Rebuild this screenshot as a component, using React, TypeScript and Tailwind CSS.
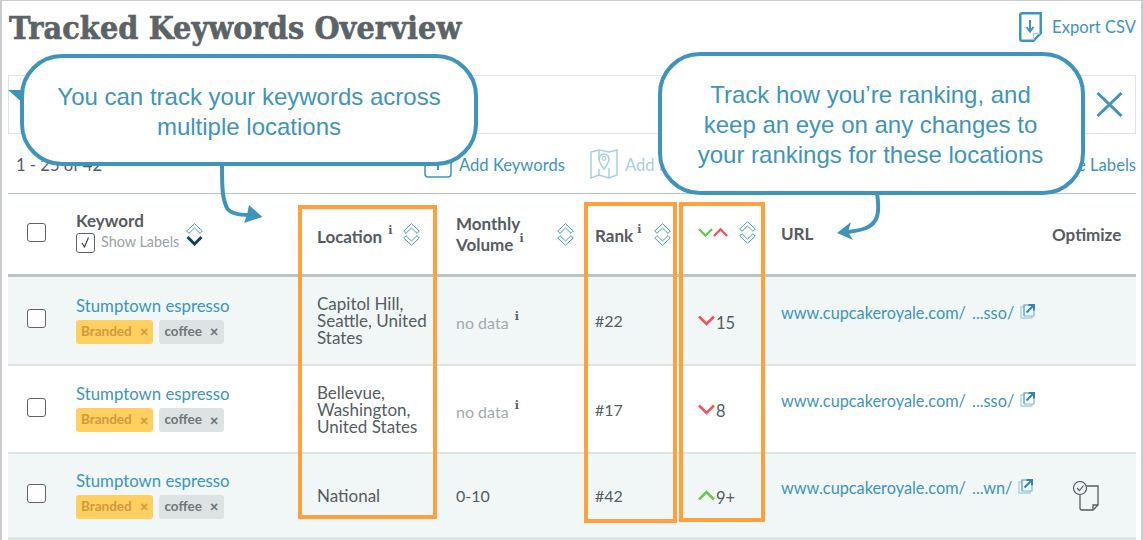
import React from "react";

const lato = "font-['Lato','Noto_Sans',sans-serif]";

function SortIcon({ active = false }: { active?: boolean }) {
  return (
    <svg width="17" height="23" viewBox="0 0 17 23" fill="none" className="shrink-0">
      <path d="M0.7 8 L8.5 0.7 L16.3 8 L14 10.3 L8.5 5 L3 10.3 Z" stroke="#4b9cc2" strokeWidth="1" />
      {active ? (
        <path d="M1.5 14 L8.5 21 L15.5 14" stroke="#12435c" strokeWidth="3" />
      ) : (
        <path d="M0.7 15 L8.5 22.3 L16.3 15 L14 12.7 L8.5 18 L3 12.7 Z" stroke="#4b9cc2" strokeWidth="1" />
      )}
    </svg>
  );
}

function Info({ className = "ml-[2px]" }: { className?: string }) {
  return <sup className={`font-['DejaVu_Serif',serif] text-[11px] font-bold text-[#555c5f] leading-none -top-[0.8em] ${className}`}>i</sup>;
}

function Checkbox() {
  return <span className="block w-[19px] h-[19px] bg-white border border-[#5b6366] rounded-[3px]" />;
}

function Chip({ label, tone }: { label: string; tone: "yellow" | "gray" }) {
  const cls = tone === "yellow" ? "bg-[#ffd05f] text-[#cf9a3f]" : "bg-[#dde3e2] text-[#6f7779]";
  return (
    <span className={`flex items-center h-[24px] px-[5px] gap-[8px] rounded-[3px] text-[13.5px] font-bold leading-none ${cls}`}>
      {label}
      <span className="text-[15px] font-black">×</span>
    </span>
  );
}

function Chevron({ dir, w = 17, color }: { dir: "up" | "down"; w?: number; color: string }) {
  const up = dir === "up";
  return (
    <svg width={w} height="11" viewBox="0 0 17 11" fill="none" className="shrink-0">
      <path d={up ? "M1 9.5 L8.5 2 L16 9.5" : "M1 1.5 L8.5 9 L16 1.5"} stroke={color} strokeWidth="2.5" />
    </svg>
  );
}

function ExtIcon() {
  return (
    <svg width="15" height="16" viewBox="0 0 15 16" fill="none" className="ml-[6px] -mt-[3px] shrink-0">
      <path d="M3 4 H1 V15 H12 V13" stroke="#a9cfe0" strokeWidth="1.3" />
      <path d="M14 7.5 V13 H4" stroke="#7db8d4" strokeWidth="1.2" />
      <path d="M4 13 V2 H9" stroke="#3f94bc" strokeWidth="1.2" />
      <path d="M6.5 9.5 L13 3 M8.5 2 H14 V7.5" stroke="#2f86b0" strokeWidth="2" />
    </svg>
  );
}

type Row = {
  loc: string[];
  vol: string | null;
  rank: string;
  dir: "up" | "down";
  delta: string;
  url: string;
  h: string;
  bg: string;
  opt?: boolean;
};

const rows: Row[] = [
  { loc: ["Capitol Hill,", "Seattle, United", "States"], vol: null, rank: "#22", dir: "down", delta: "15", url: "www.cupcakeroyale.com/ ...sso/", h: "h-[89px] border-b-2", bg: "bg-[#f0f7f6]" },
  { loc: ["Bellevue,", "Washington,", "United States"], vol: null, rank: "#17", dir: "down", delta: "8", url: "www.cupcakeroyale.com/ ...sso/", h: "h-[88px] border-b-2", bg: "bg-white" },
  { loc: ["National"], vol: "0-10", rank: "#42", dir: "up", delta: "9+", url: "www.cupcakeroyale.com/ ...wn/", h: "h-[86px] border-b-[3px]", bg: "bg-[#f0f7f6]", opt: true },
];

const grid = "grid grid-cols-[68px_241px_139px_139px_103px_83px_271px_84px] items-center";

export default function App() {
  return (
    <div className={`relative w-[1143px] h-[540px] overflow-hidden bg-white border-t border-x-2 border-[#c9cccc] ${lato} text-[#555c5f]`}>
      <div className="pl-[6px] pr-[5px]">
        <div className="flex items-start justify-between h-[74px]">
          <h1 className="font-['DejaVu_Serif',serif] [font-stretch:condensed] [-webkit-text-stroke:0.6px_#5b6366] font-bold text-[32px] leading-[40px] mt-[7px] ml-[1px] text-[#5b6366] tracking-[0.1px]">
            Tracked Keywords Overview
          </h1>
          <div className="flex items-center mt-[11px] text-[16.6px] text-[#3f94bc] leading-none">
            <svg width="23" height="30" viewBox="0 0 23 30" fill="none" className="mr-[10px]">
              <path d="M3 1.25 H21.75 V21 L14.5 28.75 H3 Q1.25 28.75 1.25 27 V3 Q1.25 1.25 3 1.25 Z" stroke="#3f94bc" strokeWidth="2.5" />
              <path d="M14.5 28 V21.5 H21" stroke="#a9cfe0" strokeWidth="1.5" />
              <path d="M11 8 V19 M7.5 15 L11 19.5 L14.5 15" stroke="#3f94bc" strokeWidth="2" />
            </svg>
            Export CSV
          </div>
        </div>
        <div className="flex items-center justify-end h-[59px] border border-[#dde4e3] pr-[12px]">
          <svg width="27" height="25" viewBox="0 0 27 25" fill="none">
            <path d="M1.5 1 L25.5 24 M25.5 1 L1.5 24" stroke="#3f94bc" strokeWidth="3" />
          </svg>
        </div>
        <div className="relative flex items-center h-[60px] border-b border-[#b9c4c4] text-[16.6px] pl-[8px]">
          <span className="w-[408px] pt-[3px]">1 - 25 of 42</span>
          <span className="flex items-center text-[#3f94bc]">
            <svg width="28" height="30" viewBox="0 0 28 30" fill="none" className="mr-[7px]">
              <rect x="1" y="1" width="26" height="27" rx="3" stroke="#3f94bc" strokeWidth="1.5" />
              <path d="M14 8 V21 M8 14.5 H20" stroke="#3f94bc" strokeWidth="2" />
            </svg>
            <span className="pt-[3px]">Add Keywords</span>
          </span>
          <span className="flex items-center text-[#a9cfe0] ml-[25px]">
            <svg width="28" height="30" viewBox="0 0 28 30" fill="none" className="mr-[7px]">
              <path d="M1 3 L9 1 L19 3 L27 1 V26 L19 29 L9 26 L1 29 Z M9 1 V11 M19 19 V29 M9 20 V26" stroke="#a9cfe0" strokeWidth="1.5" />
              <path d="M14 20 C11 16 9 13 9 10 A5 5 0 0 1 19 10 C19 13 17 16 14 20 Z" stroke="#a9cfe0" strokeWidth="1.5" />
              <circle cx="14" cy="9.5" r="1.8" stroke="#a9cfe0" strokeWidth="1.2" />
            </svg>
            <span className="pt-[3px]">Add Locations</span>
          </span>
          <span className="ml-auto pt-[3px] text-[#3f94bc]">Manage Labels</span>
        </div>

        <div className={`${grid} h-[83px] border-b-[3px] border-[#b9c4c4] text-[17px] font-bold leading-[20px]`}>
          <div className="pl-[19px] -mt-[4px]"><Checkbox /></div>
          <div className="flex items-center">
            <div className="w-[110px] -mt-[5px]">
              <div className="mb-[2px]">Keyword</div>
              <div className="flex items-center text-[14.4px] font-normal text-[#9aa1a3] leading-none">
                <span className="flex items-center justify-center w-[19px] h-[20px] mr-[6px] bg-white border border-[#5b6366] rounded-[3px]">
                  <svg width="11" height="13" viewBox="0 0 11 13" fill="none"><path d="M2 7 L4.5 11 L8.5 1.5" stroke="#444" strokeWidth="1.2" /></svg>
                </span>
                Show Labels
              </div>
            </div>
            <SortIcon active />
          </div>
          <div className="flex items-center">
            <span className="w-[86px] pt-[6px]">Location <Info /></span>
            <SortIcon />
          </div>
          <div className="flex items-center">
            <span className="w-[101px] leading-[21px]">Monthly<br />Volume <Info /></span>
            <SortIcon />
          </div>
          <div className="flex items-center">
            <span className="w-[59px] pt-[4px]">Rank <Info className="ml-0" /></span>
            <SortIcon />
          </div>
          <div className="flex items-center -mt-[3px]">
            <span className="flex w-[41px]">
              <Chevron dir="down" w={15} color="#69c84a" />
              <Chevron dir="up" w={15} color="#f4525a" />
            </span>
            <SortIcon />
          </div>
          <div className="-mt-[1px]">URL</div>
          <div className="mt-[1px]">Optimize</div>
        </div>

        {rows.map((r, i) => (
          <div key={i} className={`${grid} ${r.h} ${r.bg} border-[#dde4e3] text-[16px] leading-[17px]`}>
            <div className="pl-[19px] pb-[4px]"><Checkbox /></div>
            <div className="pb-[2px]">
              <div className="text-[16.8px] text-[#3f94bc] leading-[20px] mb-[4px]">Stumptown espresso</div>
              <div className="flex gap-[6px]">
                <Chip label="Branded" tone="yellow" />
                <Chip label="coffee" tone="gray" />
              </div>
            </div>
            <div className="text-[17px]">{r.loc.map((l) => <div key={l}>{l}</div>)}</div>
            <div>
              {r.vol ?? <span className="text-[#a3aaac] inline-block mt-[4px]">no data <Info /></span>}
            </div>
            <div>{r.rank}</div>
            <div className="flex items-center">
              <Chevron dir={r.dir} color={r.dir === "up" ? "#69c84a" : "#f4525a"} />
              <span className="mt-[5px] ml-[1px] text-[16.5px]">{r.delta}</span>
            </div>
            <div className="flex items-center pb-[17px] text-[#3f94bc] text-[16.3px] [word-spacing:2px]">
              {r.url}
              <ExtIcon />
            </div>
            <div className="pl-[20px]">
              {r.opt && (
                <svg width="27" height="30" viewBox="0 0 27 30" fill="none">
                  <path d="M8 13 V27 Q8 29 10 29 H21 L26 24 V5 H13" stroke="#555c5f" strokeWidth="1.3" />
                  <path d="M21 29 V24 H26" stroke="#555c5f" strokeWidth="1.3" />
                  <circle cx="8" cy="7" r="6.5" fill="#f0f7f6" stroke="#555c5f" strokeWidth="1.2" />
                  <path d="M5 7 L7.5 9.5 L11.5 4.5" stroke="#555c5f" strokeWidth="1.2" />
                </svg>
              )}
            </div>
          </div>
        ))}
      </div>

      {/* annotation overlays */}
      <svg className="absolute left-[6px] top-[89px]" width="16" height="14" viewBox="0 0 16 14"><path d="M0 0 H16 V14 Z" fill="#3f94bc" /></svg>

      <div className="absolute left-[18px] top-[53px] w-[458px] h-[112px] pt-[4px] rounded-[42px] border-[4px] border-[#3f94bc] bg-white flex items-center justify-center text-center font-['Liberation_Sans',sans-serif] text-[24px] leading-[30px] text-[#3f94bc]">
        <div>You can track your keywords across<br />multiple locations</div>
      </div>
      <div className="absolute left-[656px] top-[51px] w-[427px] h-[143px] pt-[2px] pr-[2px] rounded-[42px] border-[4px] border-[#3f94bc] bg-white flex items-center justify-center text-center font-['Liberation_Sans',sans-serif] text-[24px] leading-[30px] text-[#3f94bc]">
        <div>Track how you’re ranking, and<br />keep an eye on any changes to<br />your rankings for these locations</div>
      </div>

      <svg className="absolute left-[210px] top-[164px]" width="60" height="62" viewBox="0 0 60 62" fill="none">
        <path d="M10 0 C10 20 10 33 15 43 C18 48 26 50 37 50" stroke="#3f94bc" strokeWidth="4" />
        <path d="M50.5 52 L32 58 L35 50 L37 40 Z" fill="#3f94bc" />
      </svg>
      <svg className="absolute left-[832px] top-[192px]" width="50" height="52" viewBox="0 0 50 52" fill="none">
        <path d="M43 0 C46 20 44 30 32 35 C27 37 22 38 14 39" stroke="#3f94bc" strokeWidth="4" />
        <path d="M3 40 L17 29 L14 39 L19 47 Z" fill="#3f94bc" />
      </svg>

      <div className="absolute left-[296px] top-[204px] w-[139px] h-[314px] border-[4px] border-[#ff9f3d]" />
      <div className="absolute left-[582px] top-[201px] w-[93px] h-[321px] border-[4px] border-[#ff9f3d]" />
      <div className="absolute left-[677px] top-[201px] w-[86px] h-[320px] border-[4px] border-[#ff9f3d]" />
    </div>
  );
}
